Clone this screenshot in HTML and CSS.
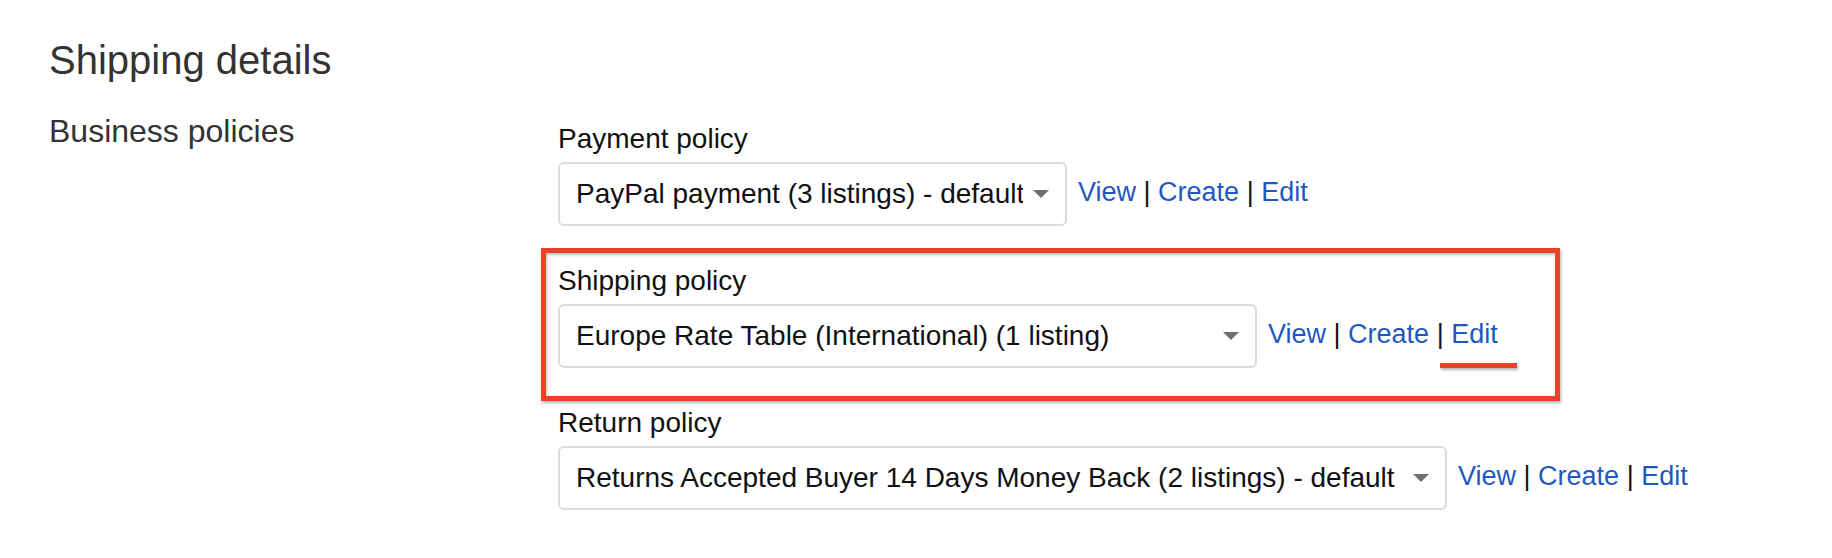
FILE: index.html
```html
<!DOCTYPE html>
<html lang="en">
<head>
<meta charset="utf-8">
<title>Shipping details</title>
<link rel="stylesheet" href="styles.css">
</head>
<body>
<div class="page">
  <h1 class="page-title">Shipping details</h1>
  <div class="row">
    <h2 class="section-title">Business policies</h2>
    <div class="policies">
      <div class="group">
        <div class="label">Payment policy</div>
        <div class="field">
          <div class="select select--payment">
            <span class="select-text">PayPal payment (3 listings) - default</span>
            <svg class="arrow" width="16" height="8" viewBox="0 0 16 8"><path d="M0 0H16L8 8Z"/></svg>
          </div>
          <div class="links"><a href="#">View</a> | <a href="#">Create</a> | <a href="#">Edit</a></div>
        </div>
      </div>
      <div class="group group--marked">
        <div class="label">Shipping policy</div>
        <div class="field">
          <div class="select select--shipping">
            <span class="select-text">Europe Rate Table (International) (1 listing)</span>
            <svg class="arrow" width="16" height="8" viewBox="0 0 16 8"><path d="M0 0H16L8 8Z"/></svg>
          </div>
          <div class="links"><a href="#">View</a> | <a href="#">Create</a> <span class="mark-start">| <a href="#">Edit</a></span></div>
        </div>
        <div class="annot-box"></div>
      </div>
      <div class="group">
        <div class="label">Return policy</div>
        <div class="field">
          <div class="select select--return">
            <span class="select-text">Returns Accepted Buyer 14 Days Money Back (2 listings) - default</span>
            <svg class="arrow" width="16" height="8" viewBox="0 0 16 8"><path d="M0 0H16L8 8Z"/></svg>
          </div>
          <div class="links"><a href="#">View</a> | <a href="#">Create</a> | <a href="#">Edit</a></div>
        </div>
      </div>
    </div>
  </div>
</div>
</body>
</html>
```
FILE: styles.css
```css
html, body {
  margin: 0;
  padding: 0;
  background: #ffffff;
}

body {
  font-family: "Liberation Sans", Arial, Helvetica, sans-serif;
  color: #111111;
}

.page {
  padding: 36px 0 0 49px;
}

.page-title {
  margin: 0 0 27px 0;
  font-size: 40px;
  line-height: 48px;
  font-weight: 400;
  color: #333333;
}

.row {
  display: grid;
  grid-template-columns: 509px 1fr;
}

.section-title {
  margin: 0;
  font-size: 32px;
  line-height: 40px;
  font-weight: 400;
  color: #333333;
}

.policies {
  padding-top: 8px;
  display: flex;
  flex-direction: column;
  gap: 35px;
}

.group {
  position: relative;
}

.label {
  font-size: 28px;
  line-height: 40px;
  margin-bottom: 3px;
  color: #111111;
}

.field {
  display: flex;
  align-items: center;
  gap: 11px;
}

.select {
  box-sizing: border-box;
  height: 64px;
  display: flex;
  align-items: center;
  gap: 10px;
  padding: 0 16px;
  border: 2px solid #dcdcdc;
  border-radius: 6px;
  background: #ffffff;
  font-size: 28px;
  line-height: 32px;
  color: #111111;
  white-space: nowrap;
}

.select--payment { width: 509px; }
.select--shipping { width: 699px; }
.select--return { width: 889px; }

.select-text {
  flex: 1;
  overflow: hidden;
}

.arrow {
  flex: none;
  fill: #6e6e6e;
}

.links {
  font-size: 27px;
  line-height: 32px;
  padding-bottom: 4px;
  color: #111111;
  white-space: nowrap;
}

.links a {
  color: #1f58bf;
  text-decoration: none;
}

.mark-start {
  position: relative;
  display: inline-block;
}

.mark-start::after {
  content: "";
  position: absolute;
  left: 3px;
  top: 45px;
  width: 77px;
  height: 5px;
  background: #ea4228;
  box-shadow: 1px 2px 3px rgba(0, 0, 0, 0.3);
}

.annot-box {
  position: absolute;
  left: -17px;
  top: -13px;
  width: 1019px;
  height: 153px;
  box-sizing: border-box;
  border: 5px solid #ea4228;
  box-shadow: 1px 2px 3px rgba(0, 0, 0, 0.3), inset 1px 2px 3px rgba(0, 0, 0, 0.25);
  pointer-events: none;
}
```
